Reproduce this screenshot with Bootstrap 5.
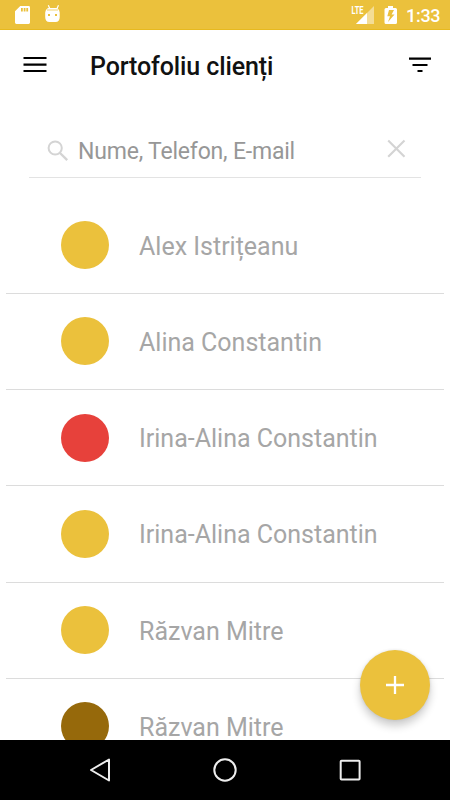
<!DOCTYPE html>
<html lang="ro">
<head>
<meta charset="utf-8">
<meta name="viewport" content="width=device-width, initial-scale=1">
<title>Portofoliu clienți</title>
<link href="https://cdn.jsdelivr.net/npm/bootstrap@5.3.0/dist/css/bootstrap.min.css" rel="stylesheet">
<style>
  :root { --gold: #ebc13c; }
  body { font-family: Roboto, "Noto Sans", sans-serif; }
  .screen { width: 450px; height: 800px; background: #fff; }
  .status-strip { height: 30px; background: var(--gold); border-bottom: 1px solid #e7b91f; padding: 0 10px 0 13px; }
  .clock { width: 34px; margin-left: 2px; font-size: 18px; font-weight: 500; letter-spacing: -.3px; line-height: 30px; padding-top: 2px; }
  .title-bar { height: 70px; padding: 0 18px 0 20px; }
  .title-text { font-size: 25px; letter-spacing: -.12px; font-weight: 500; line-height: 30px; color: #111; margin-left: 40px; white-space: nowrap; }
  .search-box { height: 54px; margin: 24px 29px 0; border-bottom: 1px solid #e3e3e3; padding: 0 13px 0 16px; }
  .search-text { font-size: 23px; letter-spacing: -.2px; line-height: 30px; color: #979797; margin-left: 7px; padding-top: 3px; }
  .clients { margin: 19.5px 6px 0; }
  .client { height: 96.25px; border-bottom: 1.25px solid #dcdcdc; padding-left: 55px; }
  .dot { width: 48px; height: 48px; background: var(--gold); }
  .dot-red { background: #e7413b; }
  .dot-brown { background: #96690b; }
  .client-name { font-size: 25px; line-height: 30px; color: #a6a6a6; margin-left: 30px; padding-top: 3px; white-space: nowrap; }
  .fab { width: 70px; height: 70px; right: 20px; bottom: 20px; background: var(--gold); box-shadow: 0 6px 9px rgba(0,0,0,.2), 0 0 3px rgba(0,0,0,.1); }
  .nav-strip { height: 60px; padding: 0 85px; }
  svg { display: block; flex: none; }
</style>
</head>
<body>
<div class="screen d-flex flex-column overflow-hidden">
  <header class="status-strip d-flex align-items-center justify-content-between flex-shrink-0 text-white">
    <svg width="50" height="30" viewBox="13 0 50 30" fill="#fff">
      <path fill-rule="evenodd" d="M20.3 6H28.6Q30 6 30 7.4V22.6Q30 24 28.6 24H16.4Q15 24 15 22.6V11.3ZM21 8v3.6h1.8V8ZM23.7 8v3.6h1.8V8ZM26.3 8v3.6h1.8V8Z"/>
      <path d="M48.300 5.2L50 9M58.500 5.2L56.8 9" stroke="#fff" stroke-width="1.2"/>
      <path fill-rule="evenodd" d="M45.2 12.5Q46 8 49 8H56Q59 8 59.7 12.5V17Q59.7 22 55.5 22H49.5Q45.2 22 45.2 17ZM48 14v2h2v-2ZM55 14v2h2v-2Z"/>
      <path d="M47 10H58" stroke="#f8e9b8" stroke-width="2"/>
    </svg>
    <div class="d-flex align-items-center">
      <svg width="54" height="30" viewBox="350 0 54 30" fill="#fff">
        <path d="M374 6V24H356Z" fill="#f4dd95"/>
        <path d="M367 13V24H356Z"/>
        <text x="351.5" y="14" font-size="10" font-weight="700" textLength="12" lengthAdjust="spacingAndGlyphs">LTE</text>
        <path fill-rule="evenodd" d="M388 6H393V8H395.5Q397 8 397 9.5V22.5Q397 24 395.500 24H386Q384.500 24 384.500 22.500V9.500Q384.500 8 386 8H388ZM389 10L387.300 16.300H390L388 22L394.500 14.500H391.600L394 10Z"/>
      </svg>
      <span class="clock">1:33</span>
    </div>
  </header>

  <nav class="title-bar d-flex align-items-center flex-shrink-0">
    <svg width="30" height="30" viewBox="0 0 30 30"><path d="M3.500 8H26.500M3.500 14.600H26.500M3.500 21H26.500" stroke="#000" stroke-width="2.200"/></svg>
    <h1 class="title-text mb-0 pt-1">Portofoliu clienți</h1>
    <svg class="ms-auto" width="24" height="30" viewBox="408 50 24 30"><path d="M409 58.700H431M412.500 65H427.500M417.500 71H422.500" stroke="#000" stroke-width="2.200"/></svg>
  </nav>

  <main class="position-relative flex-grow-1 overflow-hidden">
    <div class="search-box d-flex align-items-center">
      <svg width="26" height="26" viewBox="45 138 26 26" fill="none" stroke="#d4d4d4"><circle cx="55.200" cy="148" r="6.600" stroke-width="2"/><path d="M60 153L67.200 160.200" stroke-width="2.400"/></svg>
      <span class="search-text">Nume, Telefon, E-mail</span>
      <svg class="ms-auto" width="24" height="30" viewBox="384 136 24 30"><path d="M388.200 140.500L404.500 156.800M404.500 140.500L388.200 156.800" stroke="#d4d4d4" stroke-width="2.100"/></svg>
    </div>
    <ul class="clients list-unstyled mb-0">
      <li class="client d-flex align-items-center"><span class="dot rounded-circle"></span><span class="client-name">Alex Istrițeanu</span></li>
      <li class="client d-flex align-items-center"><span class="dot rounded-circle"></span><span class="client-name">Alina Constantin</span></li>
      <li class="client d-flex align-items-center"><span class="dot dot-red rounded-circle"></span><span class="client-name">Irina-Alina Constantin</span></li>
      <li class="client d-flex align-items-center"><span class="dot rounded-circle"></span><span class="client-name">Irina-Alina Constantin</span></li>
      <li class="client d-flex align-items-center"><span class="dot rounded-circle"></span><span class="client-name">Răzvan Mitre</span></li>
      <li class="client d-flex align-items-center"><span class="dot dot-brown rounded-circle"></span><span class="client-name">Răzvan Mitre</span></li>
    </ul>
    <button type="button" aria-label="Adaugă" class="fab position-absolute border-0 rounded-circle p-0 d-flex align-items-center justify-content-center">
      <svg width="18" height="18" viewBox="0 0 18 18"><path d="M0 9H18M9 0V18" stroke="#fff" stroke-width="2.300"/></svg>
    </button>
  </main>

  <footer class="nav-strip d-flex align-items-center justify-content-between flex-shrink-0 bg-black">
    <svg width="30" height="30" viewBox="85 755 30 30"><path d="M109 759.500V780.500L91 770Z" fill="none" stroke="#eee" stroke-width="2" stroke-linejoin="round"/></svg>
    <svg width="30" height="30" viewBox="0 0 30 30"><circle cx="15" cy="15" r="10.700" fill="none" stroke="#eee" stroke-width="2"/></svg>
    <svg width="30" height="30" viewBox="0 0 30 30"><rect x="5.700" y="5.700" width="18.900" height="18.900" rx=".8" fill="none" stroke="#eee" stroke-width="2"/></svg>
  </footer>
</div>
<script src="https://cdn.jsdelivr.net/npm/bootstrap@5.3.0/dist/js/bootstrap.bundle.min.js"></script>
</body>
</html>
